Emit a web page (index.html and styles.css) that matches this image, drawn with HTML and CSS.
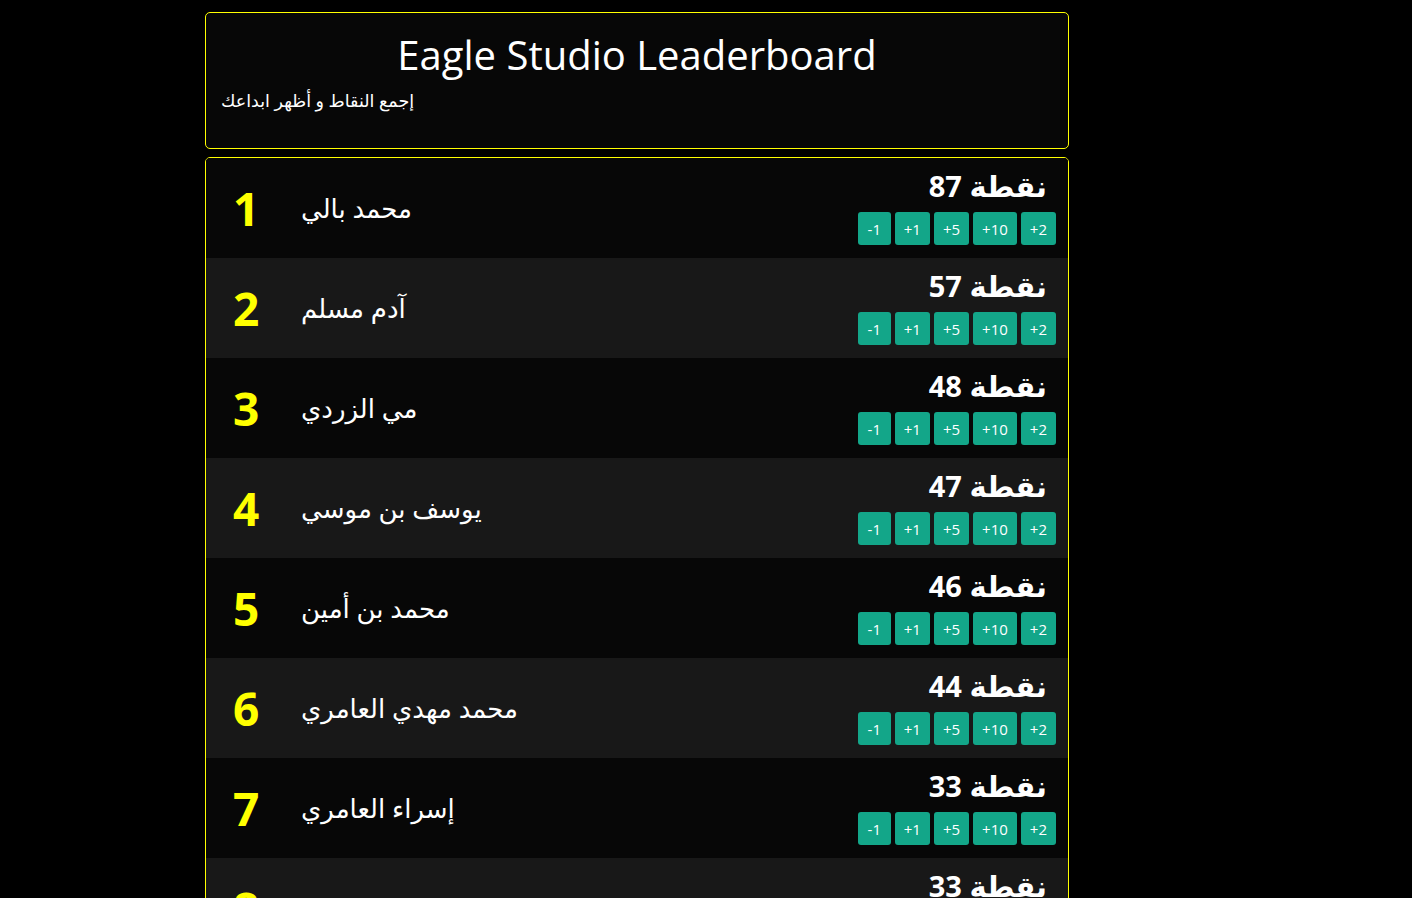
FILE: index.html
```html
<!DOCTYPE html>
<html lang="ar">
<head>
<meta charset="utf-8">
<title>Eagle Studio Leaderboard</title>
<link rel="stylesheet" href="styles.css">
</head>
<body>
<div class="container">
  <header class="head">
    <h1 class="title">Eagle Studio Leaderboard</h1>
    <p class="subtitle" dir="rtl">إجمع النقاط و أظهر ابداعك</p>
  </header>
  <div class="board">
    <div class="row">
      <div class="rank">1</div>
      <div class="name" dir="rtl">محمد بالي</div>
      <div class="score">
        <div class="points" dir="rtl">نقطة 87</div>
        <div class="btns"><span class="btn">-1</span><span class="btn">+1</span><span class="btn">+5</span><span class="btn">+10</span><span class="btn">+2</span></div>
      </div>
    </div>
    <div class="row">
      <div class="rank">2</div>
      <div class="name" dir="rtl">آدم مسلم</div>
      <div class="score">
        <div class="points" dir="rtl">نقطة 57</div>
        <div class="btns"><span class="btn">-1</span><span class="btn">+1</span><span class="btn">+5</span><span class="btn">+10</span><span class="btn">+2</span></div>
      </div>
    </div>
    <div class="row">
      <div class="rank">3</div>
      <div class="name" dir="rtl">مي الزردي</div>
      <div class="score">
        <div class="points" dir="rtl">نقطة 48</div>
        <div class="btns"><span class="btn">-1</span><span class="btn">+1</span><span class="btn">+5</span><span class="btn">+10</span><span class="btn">+2</span></div>
      </div>
    </div>
    <div class="row">
      <div class="rank">4</div>
      <div class="name" dir="rtl">يوسف بن موسي</div>
      <div class="score">
        <div class="points" dir="rtl">نقطة 47</div>
        <div class="btns"><span class="btn">-1</span><span class="btn">+1</span><span class="btn">+5</span><span class="btn">+10</span><span class="btn">+2</span></div>
      </div>
    </div>
    <div class="row">
      <div class="rank">5</div>
      <div class="name" dir="rtl">محمد بن أمين</div>
      <div class="score">
        <div class="points" dir="rtl">نقطة 46</div>
        <div class="btns"><span class="btn">-1</span><span class="btn">+1</span><span class="btn">+5</span><span class="btn">+10</span><span class="btn">+2</span></div>
      </div>
    </div>
    <div class="row">
      <div class="rank">6</div>
      <div class="name" dir="rtl">محمد مهدي العامري</div>
      <div class="score">
        <div class="points" dir="rtl">نقطة 44</div>
        <div class="btns"><span class="btn">-1</span><span class="btn">+1</span><span class="btn">+5</span><span class="btn">+10</span><span class="btn">+2</span></div>
      </div>
    </div>
    <div class="row">
      <div class="rank">7</div>
      <div class="name" dir="rtl">إسراء العامري</div>
      <div class="score">
        <div class="points" dir="rtl">نقطة 33</div>
        <div class="btns"><span class="btn">-1</span><span class="btn">+1</span><span class="btn">+5</span><span class="btn">+10</span><span class="btn">+2</span></div>
      </div>
    </div>
    <div class="row">
      <div class="rank">8</div>
      <div class="name" dir="rtl">سارة بلحاج</div>
      <div class="score">
        <div class="points" dir="rtl">نقطة 33</div>
        <div class="btns"><span class="btn">-1</span><span class="btn">+1</span><span class="btn">+5</span><span class="btn">+10</span><span class="btn">+2</span></div>
      </div>
    </div>
  </div>
</div>
</body>
</html>
```

FILE: styles.css
```css
* { box-sizing: border-box; }
html, body { margin: 0; padding: 0; }
body {
  background: #000;
  color: #fff;
  font-family: "Open Sans", "DejaVu Sans", sans-serif;
}
.container {
  width: 864px;
  margin: 12px 0 0 205px;
}
.head {
  height: 137px;
  border: 1px solid #ffff00;
  border-radius: 5px;
  background: #070707;
  padding: 0 15px;
}
.title {
  margin: 0;
  padding-top: 16px;
  text-align: center;
  font-weight: 400;
  font-size: 40px;
  line-height: 52px;
}
.subtitle {
  margin: 7px 0 0;
  text-align: left;
  font-size: 17.5px;
  line-height: 24px;
}
.board {
  margin-top: 8px;
  border: 1px solid #ffff00;
  border-radius: 5px;
  overflow: hidden;
}
.row {
  height: 100px;
  display: flex;
  align-items: center;
  padding: 0 12px 0 26px;
  background: #070707;
}
.row:nth-child(even) { background: #181818; }
.rank {
  width: 69px;
  color: #ffff00;
  font-weight: 700;
  font-size: 46px;
  line-height: 1;
  padding-left: 1px;
}
.name {
  flex: 1;
  text-align: left;
  font-size: 26px;
}
.score {
  display: flex;
  flex-direction: column;
  align-items: flex-end;
}
.points {
  font-weight: 700;
  font-size: 29px;
  line-height: 36px;
  padding-right: 9px;
  margin-bottom: 8px;
  margin-top: -3px;
}
.btns {
  display: flex;
  gap: 4px;
}
.btn {
  height: 33px;
  min-width: 33px;
  padding: 0 9px;
  display: flex;
  align-items: center;
  justify-content: center;
  background: #13a689;
  border-radius: 3px;
  font-size: 15px;
  font-weight: 500;
}
```
